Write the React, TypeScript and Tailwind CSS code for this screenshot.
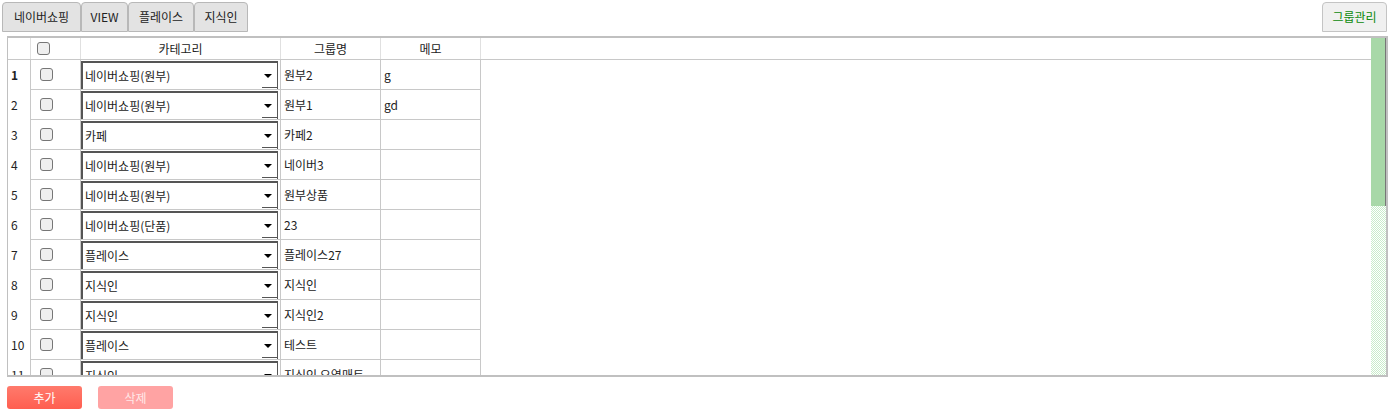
import React from 'react';

const rows = [
  { cat: '네이버쇼핑(원부)', name: '원부2', memo: 'g' },
  { cat: '네이버쇼핑(원부)', name: '원부1', memo: 'gd' },
  { cat: '카페', name: '카페2', memo: '' },
  { cat: '네이버쇼핑(원부)', name: '네이버3', memo: '' },
  { cat: '네이버쇼핑(원부)', name: '원부상품', memo: '' },
  { cat: '네이버쇼핑(단품)', name: '23', memo: '' },
  { cat: '플레이스', name: '플레이스27', memo: '' },
  { cat: '지식인', name: '지식인', memo: '' },
  { cat: '지식인', name: '지식인2', memo: '' },
  { cat: '플레이스', name: '테스트', memo: '' },
  { cat: '지식인', name: '지식인 오염매트', memo: '' },
];

const tabs = [
  { label: '네이버쇼핑', w: 'w-[79px]' },
  { label: 'VIEW', w: 'w-[47px]' },
  { label: '플레이스', w: 'w-[66px]' },
  { label: '지식인', w: 'w-[54px]' },
];

function CheckBox() {
  return <div className="w-[13px] h-[13px] rounded-[3px] border border-[#767676] bg-[#efefef]" />;
}

function Combo({ value }: { value: string }) {
  return (
    <div className="relative h-[28px] w-[197px] bg-white border-t-2 border-l-2 border-r border-[#555] flex items-center pl-[2px]">
      <span>{value}</span>
      <div className="absolute right-[5px] top-[11px] w-0 h-0 border-l-[4px] border-r-[4px] border-t-[4px] border-l-transparent border-r-transparent border-t-black" />
      <div className="absolute right-0 bottom-[1px] w-[15px] h-px bg-[#555]" />
    </div>
  );
}

export default function App() {
  return (
    <div className="w-[1397px] h-[414px] bg-white text-[12px] text-[#222] font-['Noto_Sans_CJK_KR','Noto_Sans',sans-serif] overflow-hidden">
      {/* tab bar */}
      <div className="flex justify-between pl-[2px] pr-[10px] pt-[2px] h-[36px]">
        <div className="flex">
          {tabs.map((t) => (
            <div
              key={t.label}
              className={`${t.w} h-[30px] flex items-center justify-center bg-[#e3e3e3] border border-[#b8b8b8] rounded-t-[4px] text-[#222]`}
            >
              {t.label}
            </div>
          ))}
        </div>
        <div className="w-[65px] h-[30px] flex items-center justify-center bg-[#f0f0f0] border border-[#c4c4c4] rounded-t-[4px] text-[#0a8a0a]">
          그룹관리
        </div>
      </div>

      {/* grid */}
      <div className="mx-[7px] w-[1381px] h-[341px] border-t-2 border-b-2 border-l border-[#c0c0c0] flex">
        <div className="flex-1 flex flex-col overflow-hidden">
          {/* header */}
          <div className="flex h-[22px] shrink-0 border-b border-[#c8c8c8]">
            <div className="w-[23px] border-r border-[#e0e0e0]" />
            <div className="w-[50px] border-r border-[#e0e0e0] flex items-center pl-[6px]">
              <CheckBox />
            </div>
            <div className="w-[200px] border-r border-[#e0e0e0] flex items-center justify-center">카테고리</div>
            <div className="w-[100px] border-r border-[#e0e0e0] flex items-center justify-center">그룹명</div>
            <div className="w-[100px] border-r border-[#e0e0e0] flex items-center justify-center">메모</div>
            <div className="flex-1" />
          </div>
          {/* body */}
          <div className="flex flex-col overflow-hidden">
            {rows.map((r, i) => (
              <div key={i} className="flex h-[30px] shrink-0">
                <div className={`w-[23px] border-r border-[#c8c8c8] flex items-center pl-[3px] ${i === 0 ? 'font-bold' : ''}`}>
                  {i + 1}
                </div>
                <div className="w-[50px] border-r border-b border-[#c8c8c8] flex items-center pl-[9px]">
                  <CheckBox />
                </div>
                <div className="w-[200px] border-r border-b border-[#c8c8c8] pt-px">
                  <Combo value={r.cat} />
                </div>
                <div className="w-[100px] border-r border-b border-[#c8c8c8] flex items-center pl-[3px] whitespace-pre">{r.name}</div>
                <div className="w-[100px] border-r border-b border-[#c8c8c8] flex items-center pl-[3px]">{r.memo}</div>
                <div className="flex-1" />
              </div>
            ))}
          </div>
        </div>
        {/* scrollbar */}
        <div className="w-[17px] flex flex-col border-r-2 border-[#c0c0c0] bg-[repeating-conic-gradient(#c9eccb_0_25%,#ffffff_0_50%)] bg-[length:2px_2px]">
          <div className="h-[168px] bg-[#a8d8a8] border-r border-[#777]" />
        </div>
      </div>

      {/* buttons */}
      <div className="flex gap-[16px] px-[7px] pt-[9px]">
        <button className="w-[75px] h-[23px] rounded-[3px] bg-gradient-to-b from-[#ff7a6c] to-[#ff5e50] text-white">추가</button>
        <button className="w-[75px] h-[23px] rounded-[3px] bg-[#ffa3a3] text-[#ffe8e8]">삭제</button>
      </div>
    </div>
  );
}
